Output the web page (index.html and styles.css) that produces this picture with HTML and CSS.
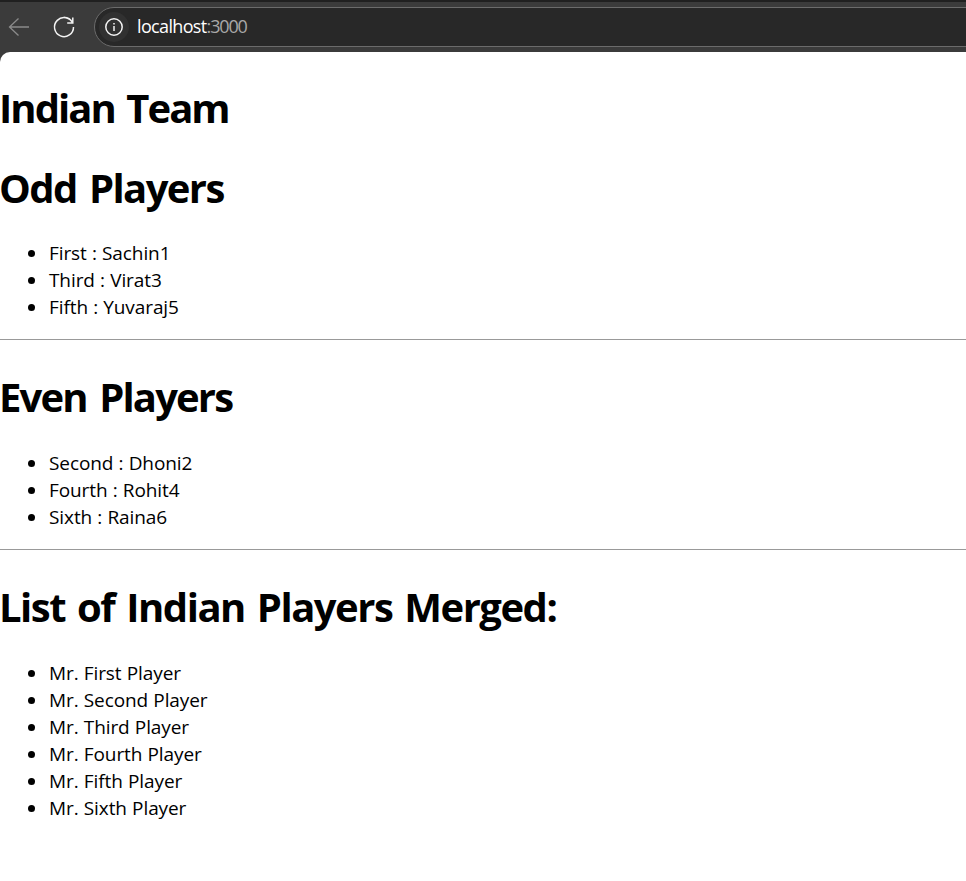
FILE: index.html
```html
<!DOCTYPE html>
<html lang="en">
<head>
<meta charset="utf-8">
<title>Indian Team</title>
<link rel="stylesheet" href="styles.css">
</head>
<body>
<header class="toolbar">
  <svg class="icon back" viewBox="0 0 24 24"><path d="M22 12H2.500M11.500 3.500L2.500 12l9 8.500"/></svg>
  <svg class="icon reload" viewBox="0 0 24 24"><path d="M20.800 8.500A9.500 9.500 0 1 0 21.500 12M20.800 2.500V8H15.200M20.500 7.500A9.500 9.500 0 0 0 12 2.500"/></svg>
  <div class="address">
    <span class="badge"><svg class="icon info" viewBox="0 0 20 20"><circle cx="10" cy="10" r="8.200"/><path d="M10 9v5M10 6v1.600"/></svg></span>
    <span class="url"><span class="host">localhost</span>:3000</span>
  </div>
</header>
<main class="page">
  <h1 class="team">Indian Team</h1>
  <h1 class="odd">Odd Players</h1>
  <ul>
    <li>First : Sachin1</li>
    <li>Third : Virat3</li>
    <li>Fifth : Yuvaraj5</li>
  </ul>
  <hr>
  <h1 class="even">Even Players</h1>
  <ul>
    <li>Second : Dhoni2</li>
    <li>Fourth : Rohit4</li>
    <li>Sixth : Raina6</li>
  </ul>
  <hr>
  <h1 class="merged">List of Indian Players Merged:</h1>
  <ul>
    <li>Mr. First Player</li>
    <li>Mr. Second Player</li>
    <li>Mr. Third Player</li>
    <li>Mr. Fourth Player</li>
    <li>Mr. Fifth Player</li>
    <li>Mr. Sixth Player</li>
  </ul>
</main>
</body>
</html>
```
FILE: styles.css
```css
* { box-sizing: border-box; }
body {
  margin: 0;
  height: 881px;
  overflow: hidden;
  background: #3b3b3b;
  color: #000;
  font-family: "Open Sans", "Noto Sans", sans-serif;
  font-size: 19px;
}
.toolbar {
  display: flex;
  align-items: center;
  height: 52px;
  padding-left: 7px;
  border-top: 2px solid #202020;
}
.icon { flex: none; fill: none; stroke: #f2f2f2; stroke-width: 1.5; }
.back { width: 24px; height: 24px; stroke: #8b8b8b; stroke-width: 1.3; }
.reload { width: 24px; height: 24px; margin-left: 21px; }
.address {
  display: flex;
  align-items: center;
  flex: 1;
  height: 40px;
  margin: 0 -30px 0 18px;
  padding-left: 4px;
  border: 1px solid #6b6b6b;
  border-radius: 20px;
  background: #282828;
}
.badge {
  display: grid;
  place-items: center;
  width: 30px;
  height: 30px;
  border-radius: 50%;
  background: #313131;
}
.info { width: 20px; height: 20px; }
.url {
  margin: 0 0 2px 8px;
  color: #a8a8a8;
  font-size: 18px;
  letter-spacing: -1.15px;
}
.host { color: #fff; letter-spacing: -0.65px; }
.page {
  height: 829px;
  padding-top: 28.600px;
  border-radius: 10px 0 0;
  background: #fff;
}
h1 {
  margin: 0 0 25.700px -1px;
  font-size: 40px;
  line-height: 54px;
  font-weight: 700;
  white-space: nowrap;
}
.team { margin-bottom: 26px; letter-spacing: -1.950px; word-spacing: 3px; }
.odd { letter-spacing: -1.600px; word-spacing: 3.500px; }
.even { letter-spacing: -1.850px; word-spacing: 4px; }
.merged { letter-spacing: -1.480px; word-spacing: 3px; }
ul { margin: 0; padding-left: 48px; }
li { padding-left: 1px; line-height: 27px; letter-spacing: -0.090px; word-spacing: 0.350px; }
hr { height: 1px; margin: 18px 0 30px; border: 0; background: #999; }
```
